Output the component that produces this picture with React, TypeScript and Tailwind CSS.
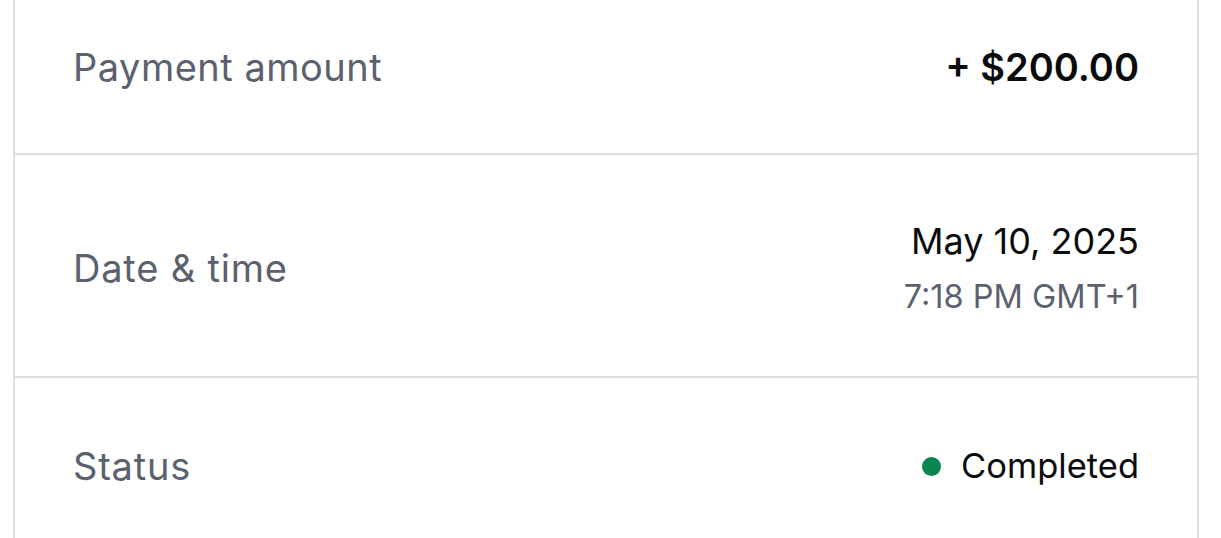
export default function App() {
  return (
    <div className="min-h-screen bg-white font-['Inter',sans-serif] overflow-hidden">
      <div className="ml-[13px] mt-[-19px] w-[1186px] border-x-2 border-[#dcdde1] bg-white">
        <div className="flex items-center justify-between border-b-2 border-[#dcdde1] px-[58px] py-[56px]">
          <span className="text-[38px] leading-[60px] tracking-[0.5px] text-[#5b616e]">Payment amount</span>
          <span className="text-[38px] leading-[60px] font-semibold text-[#0a0b0d]">+ $200.00</span>
        </div>
        <div className="flex items-center justify-between border-b-2 border-[#dcdde1] px-[58px] pt-[56px] pb-[55px]">
          <span className="mt-[4px] text-[38px] leading-[60px] tracking-[0.8px] text-[#5b616e]">Date &amp; time</span>
          <div className="flex flex-col items-end">
            <span className="text-[36px] leading-[60px] text-[#0a0b0d]">May 10, 2025</span>
            <span className="mt-[2px] text-[32.5px] leading-[48px] text-[#5b616e]">7:18 PM GMT+1</span>
          </div>
        </div>
        <div className="flex items-center justify-between px-[58px] pt-[58px] pb-[56px]">
          <span className="text-[38px] leading-[60px] tracking-[0.8px] text-[#5b616e]">Status</span>
          <div className="flex items-center gap-[20px]">
            <span className="h-[19px] w-[19px] rounded-full bg-[#098551]" />
            <span className="text-[34.5px] leading-[60px] text-[#0a0b0d]">Completed</span>
          </div>
        </div>
      </div>
    </div>
  );
}
